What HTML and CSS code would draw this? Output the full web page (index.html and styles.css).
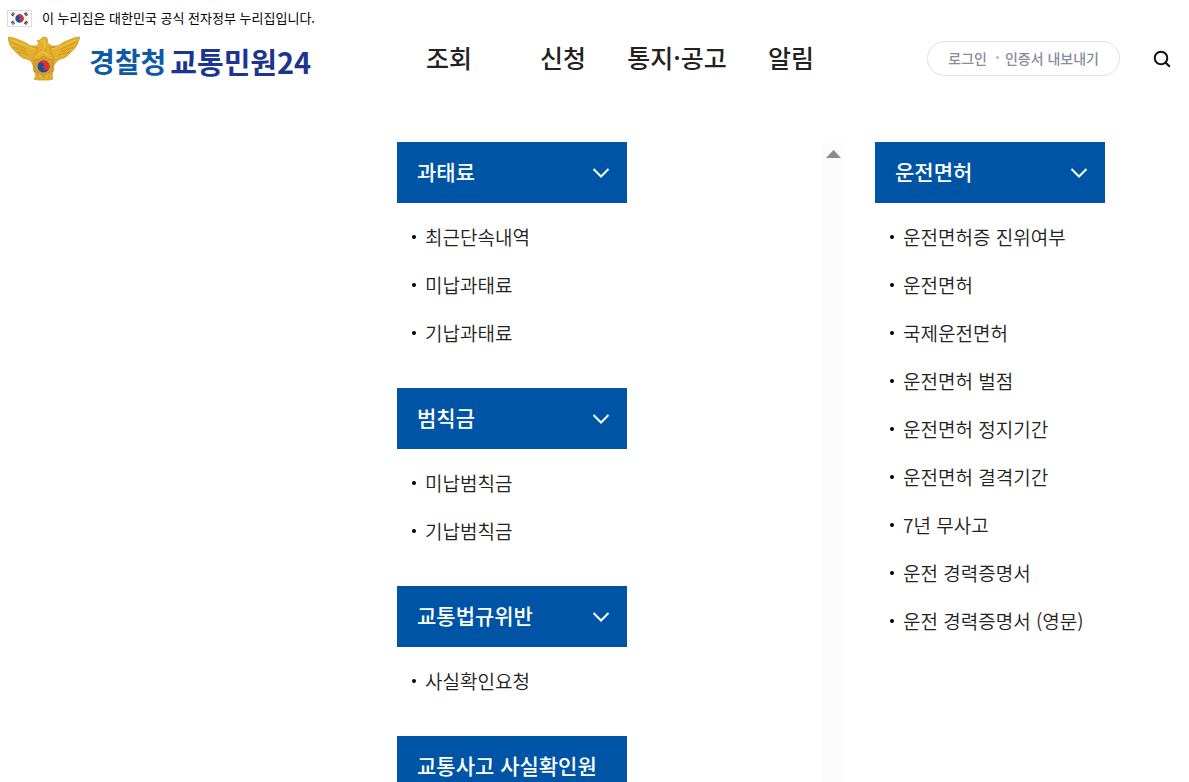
FILE: index.html
```html
<!DOCTYPE html>
<html lang="ko">
<head>
<meta charset="utf-8">
<meta name="viewport" content="width=device-width, initial-scale=1">
<title>경찰청 교통민원24</title>
<link rel="stylesheet" href="styles.css">
</head>
<body>
<svg class="sprite" aria-hidden="true">
  <symbol id="chevron" viewBox="0 0 18 12"><path d="M1.500 2 9 9.500 16.500 2" fill="none" stroke="currentColor" stroke-width="2"/></symbol>
</svg>
<div class="notice">
  <svg class="flag" viewBox="0 0 25 17" aria-hidden="true">
    <rect x=".5" y=".5" width="24" height="16" fill="#fff" stroke="#dcdcdc"/>
    <g stroke="#333" stroke-width="3" stroke-dasharray=".9 .4">
      <path d="M5 5.600 7 2.800M18 2.800 20 5.600M5 11.400 7 14.200M18 14.200 20 11.400"/>
    </g>
    <g transform="rotate(20 12.500 8.500)">
      <circle cx="12.500" cy="8.500" r="4.200" fill="#1553a4"/>
      <path d="M8.300 8.500a4.200 4.200 0 0 1 8.400 0 2.100 2.100 0 0 1-4.200 0 2.100 2.100 0 0 0-4.200 0z" fill="#d8303c"/>
    </g>
  </svg>
  <p class="notice-text">이 누리집은 대한민국 공식 전자정부 누리집입니다.</p>
</div>
<header class="header">
  <a class="brand" href="#">
    <svg class="emblem" viewBox="0 0 72 45" aria-hidden="true">
      <path d="M0 1 6 2 16 6 23 10H29L31 7 29 5 32 4 35 1 39 2 40 8 44 10H50L56 6 66 2 72 1 70 6 69 9 67 12 65 14 62 17 59 20 56 22 52 23 49 25 46 29 45 34 44 40 45 43 41 44H30L26 43 28 40 26 34 25 29 23 25 19 23 15 22 12 20 9 17 6 14 4 12 2 9 1 6z" fill="#e5b02a" stroke="#cb972c" stroke-width=".8"/>
      <g fill="none" stroke="#c08c2b" stroke-width=".7">
        <path d="M3 6 18 13M5 11 19 16M9 16 21 19M68 6 53 13M66 11 52 16M62 16 50 19M20 11 30 12M51 11 41 12M30 13 24 24M41 13 47 24M32 13 36 17 39 13M28 24 43 24M29 37 31 43M42 37 40 43M35.500 37V43"/>
      </g>
      <path d="M4 4 18 10 27 13M68 4 54 10 44 13M33 5 36 4 37 12M30 19 35 16 41 19" fill="none" stroke="#f0c440" stroke-width="1.200"/>
      <path d="m35.500 20 4 3 6 1-1 6 1 5-6 2-4 3-4-3-6-2 1-5-1-6 6-1z" fill="#d8a02c" stroke="#bb882d" stroke-width=".8"/>
      <g transform="rotate(15 35.500 30.500)">
        <circle cx="35.500" cy="30.500" r="6" fill="#1552a1"/>
        <path d="M29.500 30.500a6 6 0 0 1 12 0 3 3 0 0 1-6 0 3 3 0 0 0-6 0z" fill="#e02c36"/>
      </g>
    </svg>
    <span class="brand-name"><span class="brand-agency">경찰청</span><span class="brand-service">교통민원24</span></span>
  </a>
  <nav class="nav">
    <a href="#">조회</a><a href="#">신청</a><a href="#">통지·공고</a><a href="#">알림</a>
  </nav>
  <div class="tools">
    <a class="login" href="#"><span>로그인</span><i class="login-dot"></i><span>인증서 내보내기</span></a>
    <button class="search" type="button" aria-label="검색">
      <svg viewBox="0 0 18 18" aria-hidden="true"><circle cx="8" cy="8" r="6.300" fill="none" stroke="currentColor" stroke-width="2"/><path d="m12.500 12.500 4.300 4.300" stroke="currentColor" stroke-width="2.200"/></svg>
    </button>
  </div>
</header>
<main class="menu">
  <div class="pane pane-scroll">
    <div class="groups">
      <section class="group">
        <button class="group-head" type="button"><span>과태료</span><svg class="chevron" aria-hidden="true"><use href="#chevron"/></svg></button>
        <ul class="links"><li><a href="#">최근단속내역</a></li><li><a href="#">미납과태료</a></li><li><a href="#">기납과태료</a></li></ul>
      </section>
      <section class="group">
        <button class="group-head" type="button"><span>범칙금</span><svg class="chevron" aria-hidden="true"><use href="#chevron"/></svg></button>
        <ul class="links"><li><a href="#">미납범칙금</a></li><li><a href="#">기납범칙금</a></li></ul>
      </section>
      <section class="group">
        <button class="group-head" type="button"><span>교통법규위반</span><svg class="chevron" aria-hidden="true"><use href="#chevron"/></svg></button>
        <ul class="links"><li><a href="#">사실확인요청</a></li></ul>
      </section>
      <section class="group">
        <button class="group-head" type="button"><span>교통사고 사실확인원</span></button>
      </section>
    </div>
    <div class="track"><svg class="track-up" viewBox="0 0 15 8" aria-hidden="true"><path d="M0 8 7.500 0 15 8z" fill="#8b8b8b"/></svg></div>
  </div>
  <div class="pane">
    <section class="group">
      <button class="group-head" type="button"><span>운전면허</span><svg class="chevron" aria-hidden="true"><use href="#chevron"/></svg></button>
      <ul class="links">
        <li><a href="#">운전면허증 진위여부</a></li>
        <li><a href="#">운전면허</a></li>
        <li><a href="#">국제운전면허</a></li>
        <li><a href="#">운전면허 벌점</a></li>
        <li><a href="#">운전면허 정지기간</a></li>
        <li><a href="#">운전면허 결격기간</a></li>
        <li><a href="#">7년 무사고</a></li>
        <li><a href="#">운전 경력증명서</a></li>
        <li><a href="#">운전 경력증명서 (영문)</a></li>
      </ul>
    </section>
  </div>
</main>
</body>
</html>
```
FILE: styles.css
```css
* { box-sizing: border-box; }

body {
  display: flex;
  flex-direction: column;
  height: 100vh;
  margin: 0;
  overflow: hidden;
  background: #fff;
  color: #222;
  font-family: "Noto Sans CJK KR", sans-serif;
}

a { color: inherit; text-decoration: none; }

button {
  border: 0;
  padding: 0;
  font: inherit;
  cursor: pointer;
}

.sprite { display: none; }

.notice {
  display: flex;
  align-items: center;
  gap: 10px;
  height: 36px;
  padding-left: 7px;
}

.flag { width: 25px; height: 17px; }

.notice-text {
  margin: 0;
  color: #000;
  font-size: 13px;
  line-height: 20px;
}

.header {
  display: grid;
  grid-template-columns: 1fr 456px 341px;
  align-items: center;
  height: 45px;
  flex-shrink: 0;
}

.brand {
  display: flex;
  align-items: center;
  gap: 9px;
  padding-left: 8px;
}

.emblem { width: 72px; height: 45px; }

.brand-name {
  display: flex;
  align-items: center;
  gap: 4px;
  padding-top: 4px;
  font-weight: 700;
  line-height: 40px;
  white-space: nowrap;
}

.brand-agency { color: #0d5aa7; font-size: 28px; }
.brand-service { color: #1d3590; font-size: 29px; }

.nav {
  display: grid;
  grid-template-columns: repeat(4, 1fr);
  padding-bottom: 3px;
  font-size: 25px;
  font-weight: 500;
  line-height: 36px;
  text-align: center;
  white-space: nowrap;
}

.tools {
  display: flex;
  align-items: center;
  justify-content: flex-end;
  gap: 33px;
  padding-right: 18px;
}

.login {
  display: flex;
  align-items: center;
  padding: 0 20px 2px;
  height: 35px;
  border: 1px solid #dcdfec;
  border-radius: 18px;
  color: #868c98;
  font-size: 14px;
  font-weight: 500;
  white-space: nowrap;
}

.login-dot {
  width: 3px;
  height: 3px;
  margin: 0 6px 0 9px;
  border-radius: 50%;
  background: #b3b8cc;
}

.search {
  display: flex;
  background: none;
  color: #111;
}

.search svg { width: 18px; height: 18px; }

.menu {
  display: grid;
  grid-template-columns: 448px 314px;
  column-gap: 30px;
  justify-content: end;
  flex: 1;
  min-height: 0;
  margin-top: 61px;
}

.pane { min-height: 0; overflow: hidden; }

.pane-scroll {
  display: flex;
  justify-content: space-between;
}

.track {
  display: flex;
  justify-content: center;
  align-items: flex-start;
  width: 23px;
  padding-top: 8px;
  background: #fcfcfc;
}

.track-up { width: 15px; height: 8px; }

.group {
  width: 230px;
  margin-bottom: 31px;
}

.group-head {
  display: flex;
  align-items: center;
  justify-content: space-between;
  width: 100%;
  height: 61px;
  padding: 0 17px 0 20px;
  background: #0054a6;
  color: #fff;
  font-size: 21px;
  font-weight: 500;
  white-space: nowrap;
}

.group-head span { padding-bottom: 4px; }

.chevron { width: 18px; height: 12px; }

.links {
  margin: 0;
  padding: 10px 0 0 15px;
  list-style: none;
  font-size: 19px;
  font-weight: 350;
  line-height: 48px;
  white-space: nowrap;
}

.links li {
  display: flex;
  align-items: center;
  gap: 9px;
}

.links li::before {
  content: "";
  width: 4px;
  height: 4px;
  border-radius: 50%;
  background: #000;
}
```
